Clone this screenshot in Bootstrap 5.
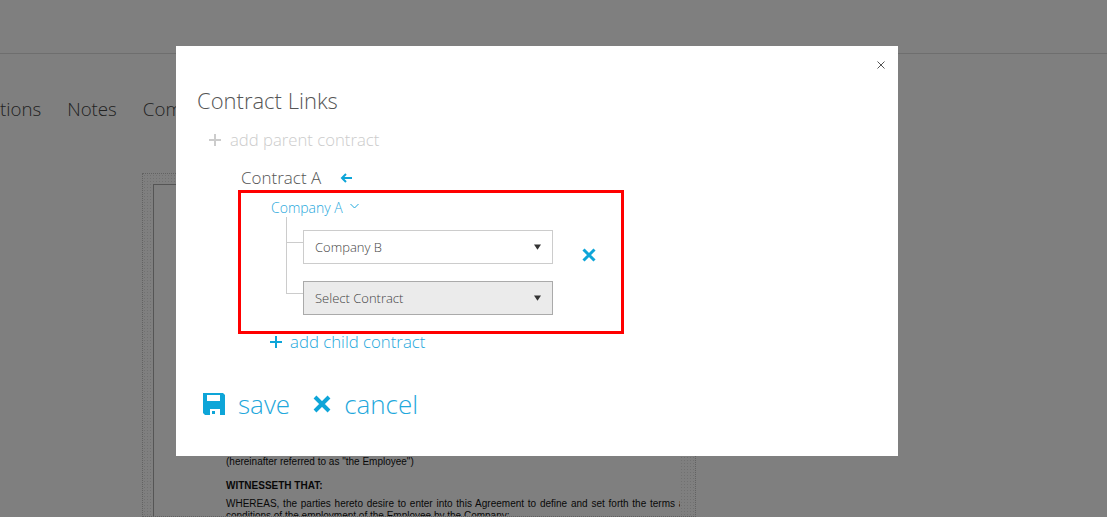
<!DOCTYPE html>
<html lang="en">
<head>
<meta charset="utf-8">
<title>Contract Links</title>
<link href="https://cdn.jsdelivr.net/npm/bootstrap@5.3.0/dist/css/bootstrap.min.css" rel="stylesheet">
<style>
html,body{height:517px;overflow:hidden;}
body{font-family:"Open Sans","Noto Sans",sans-serif;font-weight:300;background:#fff;color:#555;}
.top-strip{height:54px;border-bottom:1px solid #dcdcdc;}
.tab-row{font-size:18.7px;color:#444;padding-top:43px;height:119px;width:176px;overflow:hidden;gap:26px;line-height:24px;white-space:nowrap;}
.doc-outer{width:554px;height:344px;margin-left:142px;border:1px dotted #c4c4c4;padding:10px 15px 0 10px;overflow:hidden;
background-image:radial-gradient(circle,#e2e2e2 .7px,transparent .8px);background-size:3px 3px;background-color:#fff;}
.doc-inner{height:400px;background:#fff;border:1px solid #aaa;border-right:0;border-bottom:0;padding:271px 0 0 72px;font:10px/12px "Liberation Sans",Arial,sans-serif;color:#111;overflow:hidden;}
.doc-inner p{margin:0;white-space:nowrap;}
.doc-inner .gap-a{margin-bottom:12px;}
.doc-inner .gap-b{margin-bottom:6px;}
.doc-inner .spread{word-spacing:1px;}
.sheet{position:absolute;left:176px;top:46px;width:722px;height:410px;z-index:1060;background:#fff;border:0;border-radius:0;}
.close-x{position:absolute;left:701px;top:15px;width:8px;height:8px;padding:0;border:0;background:none;display:flex;}
.sheet-title{font-size:22px;line-height:30px;margin:39px 0 0 21px;font-weight:300;color:#555;}
.parent-row{margin:13px 0 0 33px;font-size:16.7px;line-height:24px;color:#ccc;gap:9px;}
.head-row{margin:14px 0 0 65px;font-size:17px;line-height:24px;color:#555;gap:19px;}
.red-box{width:386px;height:144px;margin:0 0 0 62px;border:3px solid #f00;position:relative;padding:6px 0 0 30px;}
.co-row{font-size:14px;line-height:18px;color:#1fa8dc;gap:7px;}
.tree{width:282px;margin:0 0 0 15px;border-left:1px solid #ccc;height:77px;padding-top:13px;}
.tree-item{height:34px;display:flex;align-items:center;}
.tree-item::before{content:"";width:16px;border-top:1px solid #ccc;flex:none;margin-bottom:10px;}
.tree-gap{height:17px;}
.pick.form-select{width:250px;height:34px;flex:none;border-radius:0;border:1px solid #ccc;padding:1px 24px 0 11px;font-size:13px;font-weight:300;color:#444;font-family:inherit;box-shadow:none;
background-image:url("data:image/svg+xml,%3Csvg xmlns='http://www.w3.org/2000/svg' viewBox='0 0 8 6'%3E%3Cpath d='M0 0h8L4 6z' fill='%23333'/%3E%3C/svg%3E");background-position:right 11px center;background-size:7px 6px;}
.pick.pick-off{background-color:#ebebeb;border-color:#aaa;}
.row-x{position:absolute;left:341px;top:55px;display:flex;}
.child-row{margin:0 0 0 94px;font-size:16.8px;line-height:16px;color:#1fa8dc;gap:8px;height:16px;}
.actions{margin:37px 0 0 27px;gap:23px;font-size:26px;line-height:34px;color:#1fa8dc;}
.act{gap:13px;}
svg{display:block;flex:none;}
</style>
</head>
<body>
<div class="top-strip"></div>
<div class="tab-row d-flex"><span>tions</span><span>Notes</span><span>Com</span></div>
<div class="doc-outer">
  <div class="doc-inner">
    <p class="gap-a">(hereinafter referred to as "the Employee")</p>
    <p class="fw-bold gap-b">WITNESSETH THAT:</p>
    <p class="spread">WHEREAS, the parties hereto desire to enter into this Agreement to define and set forth the terms a</p>
    <p>conditions of the employment of the Employee by the Company;</p>
  </div>
</div>
<div class="modal-backdrop show"></div>
<div class="sheet modal-content">
  <button class="close-x" type="button" aria-label="Close"><svg width="8" height="8" viewBox="0 0 8 8"><path d="M.5.5l7 7M7.5.5l-7 7" stroke="#555" stroke-width="1" fill="none"/></svg></button>
  <h5 class="sheet-title">Contract Links</h5>
  <div class="parent-row d-flex align-items-center">
    <svg width="12" height="12" viewBox="0 0 12 12"><path d="M6 0v12M0 6h12" stroke="#ccc" stroke-width="2"/></svg>
    <span>add parent contract</span>
  </div>
  <div class="head-row d-flex align-items-center">
    <span>Contract A</span>
    <svg width="12" height="10" viewBox="0 0 12 10"><path d="M12 5H2M6 1L2 5l4 4" stroke="#0ea5d8" stroke-width="2" fill="none"/></svg>
  </div>
  <div class="red-box">
    <div class="co-row d-flex align-items-center"><span>Company A</span>
      <svg width="9" height="6" viewBox="0 0 9 6" class="mb-1"><path d="M.5 1l4 4 4-4" stroke="#1fa8dc" stroke-width="1" fill="none"/></svg></div>
    <div class="tree">
      <div class="tree-item"><select class="pick form-select"><option>Company B</option></select></div>
      <div class="tree-gap"></div>
      <div class="tree-item"><select class="pick pick-off form-select"><option>Select Contract</option></select></div>
    </div>
    <span class="row-x"><svg width="14" height="14" viewBox="0 0 14 14"><path d="M1.5 1.5l11 11M12.5 1.5l-11 11" stroke="#0ea5d8" stroke-width="3" fill="none"/></svg></span>
  </div>
  <div class="child-row d-flex align-items-center">
    <svg width="12" height="12" viewBox="0 0 12 12"><path d="M6 0v12M0 6h12" stroke="#0ea5d8" stroke-width="2"/></svg>
    <span>add child contract</span>
  </div>
  <div class="actions d-flex align-items-center">
    <div class="act d-flex align-items-center">
      <svg width="22" height="22" viewBox="0 0 22 22"><path fill-rule="evenodd" fill="#0ea5d8" d="M0 0h20l2 2v20H2l-2-2zM4 2v6h13V2zM7 16v6h10v-6zM9 18h3v3H9z"/></svg>
      <span>save</span>
    </div>
    <div class="act d-flex align-items-center">
      <svg width="18" height="18" viewBox="0 0 18 18"><path d="M2 2l14 14M16 2L2 16" stroke="#0ea5d8" stroke-width="4" fill="none"/></svg>
      <span>cancel</span>
    </div>
  </div>
</div>
<script src="https://cdn.jsdelivr.net/npm/bootstrap@5.3.0/dist/js/bootstrap.bundle.min.js"></script>
</body>
</html>
